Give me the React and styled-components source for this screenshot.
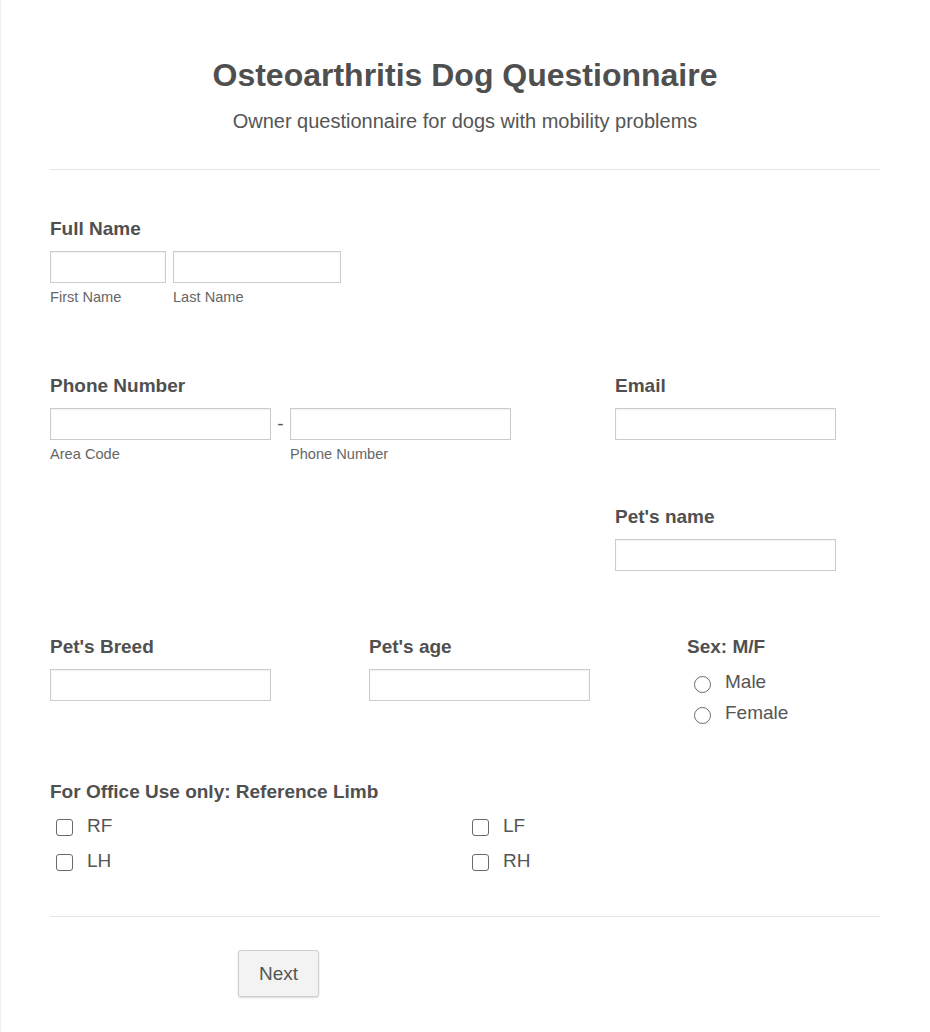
import styled, { createGlobalStyle } from "styled-components";

const GlobalStyle = createGlobalStyle`
  html, body {
    margin: 0;
    padding: 0;
    background: #ffffff;
  }
  body {
    font-family: "Liberation Sans", Arial, sans-serif;
    color: #555555;
  }
`;

const App = () => {
  return (
    <Page>
      <GlobalStyle />
      <Form>
        <Header>
          <Title>Osteoarthritis Dog Questionnaire</Title>
          <Subtitle>Owner questionnaire for dogs with mobility problems</Subtitle>
        </Header>
        <Divider $top={36} />

        {/* 이름 */}
        <Section $top={48}>
          <Label>Full Name</Label>
          <InlineFields>
            <SubField>
              <Input $w={116} />
              <SubLabel>First Name</SubLabel>
            </SubField>
            <SubField>
              <Input $w={168} />
              <SubLabel>Last Name</SubLabel>
            </SubField>
          </InlineFields>
        </Section>

        {/* 전화 / 이메일 */}
        <TwoCol>
          <div>
            <Label>Phone Number</Label>
            <InlineFields $gap={0}>
              <SubField>
                <Input $w={221} />
                <SubLabel>Area Code</SubLabel>
              </SubField>
              <Dash>-</Dash>
              <SubField>
                <Input $w={221} />
                <SubLabel>Phone Number</SubLabel>
              </SubField>
            </InlineFields>
          </div>
          <RightCol>
            <div>
              <Label>Email</Label>
              <Input $w={221} />
            </div>
            <div>
              <Label>Pet's name</Label>
              <Input $w={221} />
            </div>
          </RightCol>
        </TwoCol>

        {/* 품종 / 나이 / 성별 */}
        <ThreeCol>
          <div>
            <Label>Pet's Breed</Label>
            <Input $w={221} />
          </div>
          <div>
            <Label>Pet's age</Label>
            <Input $w={221} />
          </div>
          <div>
            <Label>Sex: M/F</Label>
            <RadioList>
              <Option $h={31}>
                <Radio />
                Male
              </Option>
              <Option $h={31}>
                <Radio />
                Female
              </Option>
            </RadioList>
          </div>
        </ThreeCol>

        {/* 사무용 */}
        <Section $top={53}>
          <Label>For Office Use only: Reference Limb</Label>
          <CheckGrid>
            <Option $h={35}>
              <Check />
              RF
            </Option>
            <Option $h={35}>
              <Check />
              LF
            </Option>
            <Option $h={35}>
              <Check />
              LH
            </Option>
            <Option $h={35}>
              <Check />
              RH
            </Option>
          </CheckGrid>
        </Section>

        <Divider $top={38} />
        <Footer>
          <NextBtn>Next</NextBtn>
        </Footer>
      </Form>
    </Page>
  );
};

export default App;

const Page = styled.div`
  min-height: 1032px;
  box-shadow: inset 1px 0 0 #f1f1f1;
`;

const Form = styled.div`
  width: 830px;
  margin: 0 auto;
  padding-top: 57px;
`;

const Header = styled.div`
  text-align: center;
`;

const Title = styled.h1`
  margin: 0;
  font-size: 32px;
  line-height: 36px;
  font-weight: 700;
  color: #4f4f4f;
`;

const Subtitle = styled.p`
  margin: 16px 0 0;
  font-size: 20px;
  line-height: 24px;
  color: #555555;
`;

const Divider = styled.hr`
  margin: ${(p) => p.$top}px 0 0;
  border: none;
  border-top: 1px solid #e6e6e6;
  height: 0;
`;

const Section = styled.div`
  margin-top: ${(p) => p.$top}px;
`;

const Label = styled.div`
  font-size: 19px;
  line-height: 22px;
  font-weight: 700;
  color: #505050;
  margin-bottom: 11px;
  white-space: nowrap;
`;

const InlineFields = styled.div`
  display: flex;
  align-items: flex-start;
  gap: ${(p) => p.$gap ?? 7}px;
`;

const SubField = styled.div`
  display: flex;
  flex-direction: column;
`;

const Input = styled.input.attrs({ type: "text" })`
  width: ${(p) => p.$w}px;
  height: 32px;
  box-sizing: border-box;
  margin: 0;
  padding: 4px 6px;
  border: 1px solid #cccccc;
  border-radius: 0;
  box-shadow: inset 0 1px 2px rgba(0, 0, 0, 0.06);
  background: #ffffff;
  font-family: inherit;
  font-size: 15px;
  display: block;
`;

const SubLabel = styled.span`
  margin-top: 6px;
  font-size: 14.6px;
  line-height: 16px;
  color: #666666;
`;

const Dash = styled.span`
  width: 19px;
  text-align: center;
  font-size: 19px;
  line-height: 32px;
  color: #555555;
`;

const TwoCol = styled.div`
  margin-top: 70px;
  display: grid;
  grid-template-columns: 565px 1fr;
`;

const RightCol = styled.div`
  display: flex;
  flex-direction: column;
  gap: 66px;
`;

const ThreeCol = styled.div`
  margin-top: 65px;
  display: grid;
  grid-template-columns: 319px 318px 1fr;
`;

const RadioList = styled.div`
  display: flex;
  flex-direction: column;
  margin-top: -3px;
`;

const Option = styled.label`
  display: flex;
  align-items: center;
  height: ${(p) => p.$h}px;
  font-size: 19px;
  color: #555555;
`;

const Radio = styled.span`
  width: 17px;
  height: 17px;
  box-sizing: border-box;
  border: 1px solid #6a6a6a;
  border-radius: 50%;
  margin: 6px 14px 0 7px;
  flex-shrink: 0;
`;

const Check = styled.span`
  width: 17px;
  height: 17px;
  box-sizing: border-box;
  border: 1px solid #6a6a6a;
  border-radius: 3px;
  margin: 3px 14px 0 6px;
  flex-shrink: 0;
`;

const CheckGrid = styled.div`
  display: grid;
  grid-template-columns: 416px 1fr;
  margin-top: -6px;
`;

const Footer = styled.div`
  padding: 33px 0 34px 188px;
`;

const NextBtn = styled.button`
  width: 81px;
  height: 47px;
  font-family: inherit;
  font-size: 19px;
  color: #555555;
  background: #f3f3f3;
  border: 1px solid #cfcfcf;
  border-radius: 3px;
  box-shadow: 0 1px 2px rgba(0, 0, 0, 0.15);
  cursor: pointer;
`;
